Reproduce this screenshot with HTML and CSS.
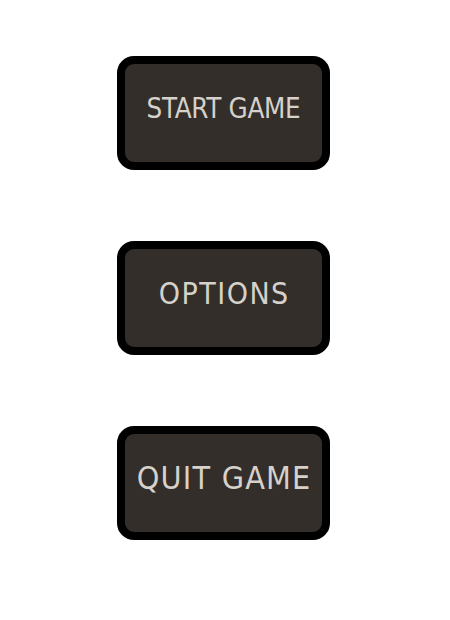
FILE: index.html
```html
<!DOCTYPE html>
<html>
<head>
<meta charset="utf-8">
<link rel="stylesheet" href="styles.css">
</head>
<body>
<div class="menu">
  <button class="btn btn-start">START GAME</button>
  <button class="btn btn-options">OPTIONS</button>
  <button class="btn btn-quit">QUIT GAME</button>
</div>
</body>
</html>
```

FILE: styles.css
```css
html, body {
  margin: 0;
  padding: 0;
  background: #ffffff;
}
.menu {
  display: flex;
  flex-direction: column;
  align-items: flex-start;
  gap: 71px;
  padding: 56px 0 0 117px;
}
.btn {
  box-sizing: border-box;
  width: 213px;
  height: 114px;
  border: 8px solid #000000;
  border-radius: 17px;
  background: #332e2a;
  color: #d6d1ca;
  font-family: "DejaVu Sans Condensed", "DejaVu Sans", Verdana, sans-serif;
  font-stretch: condensed;
  display: flex;
  align-items: center;
  justify-content: center;
  padding: 0 0 10px 0;
  margin: 0;
  white-space: nowrap;
}
.btn-start { font-size: 27.5px; letter-spacing: -0.3px; }
.btn-options { font-size: 30px; letter-spacing: 1.5px; text-indent: 1.5px; }
.btn-quit { font-size: 32px; letter-spacing: 1.2px; text-indent: 1.2px; }
```
